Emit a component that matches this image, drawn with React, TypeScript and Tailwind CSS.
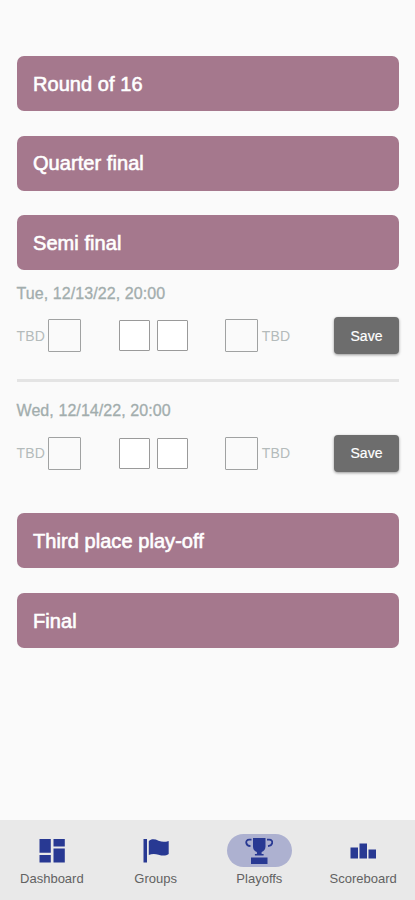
import type { ReactNode } from 'react'

function StageBar({ title }: { title: string }) {
  return (
    <h2 className="flex h-[55px] items-center rounded-[7px] bg-[#a5788d] px-[16.500px] text-[20px] font-normal tracking-[0.06px] text-white [-webkit-text-stroke:0.6px_white]">
      {title}
    </h2>
  )
}

function TeamFlag() {
  return <span className="size-[33px] shrink-0 rounded-[1px] border border-[#a0a2a2] bg-[#fafafa]" />
}

function ScoreInput({ label }: { label: string }) {
  return (
    <input
      aria-label={label}
      className="h-[31px] w-[31px] shrink-0 rounded-[1px] border border-[#9a9a9a] bg-white text-center text-sm outline-none"
    />
  )
}

function Match({ date }: { date: string }) {
  return (
    <article>
      <p className="text-[16px] leading-[20px] tracking-[0.08px] text-[#a2adad] [-webkit-text-stroke:0.3px_#a2adad]">
        {date}
      </p>
      <div className="mt-[13.500px] flex h-[37px] items-center text-[14px] text-[#b4bbbb]">
        <span className="w-[31.700px] pt-[0.3px] tracking-[0.2px]">TBD</span>
        <TeamFlag />
        <div className="ml-[37.500px] mr-[37px] flex gap-[7px]">
          <ScoreInput label="Home score" />
          <ScoreInput label="Away score" />
        </div>
        <TeamFlag />
        <span className="ml-1 pt-[0.3px] tracking-[0.2px]">TBD</span>
        <button className="ml-auto h-[37px] w-[65px] rounded-[4px] bg-[#6d6d6d] pt-[0.3px] text-[14px] text-white shadow-[0_1px_3px_rgba(0,0,0,0.4)] [-webkit-text-stroke:0.2px_white]">
          Save
        </button>
      </div>
    </article>
  )
}

function DashboardIcon() {
  return (
    <svg width="26" height="26" viewBox="0 0 26 26" fill="currentColor">
      <path d="M.5 1h11.300v13.800H.5zM.5 17h11.300v7.500H.5zM14.500 1h11.300v7.500H14.500zM14.500 10.500h11.300v14H14.500z" />
    </svg>
  )
}

function FlagIcon() {
  return (
    <svg width="26" height="26" viewBox="0 0 26 26" fill="currentColor">
      <path d="M.5 1H4v23.500H.5zM5.800 3.200C8 .9 11.500.8 15.500 2.700c3.800 1.500 6.500 1.300 10.200.2v13c-3 2.200-6 2-10.200.8-3.800-1.200-6.800-1-9.700.3z" />
    </svg>
  )
}

function TrophyIcon() {
  return (
    <svg width="28" height="28" viewBox="0 0 28 28" fill="currentColor">
      <path d="M8 1h12.500v8.500c0 3.200-1.600 4.500-3.900 5.500v2h2v1.500H9.900V17h2v-2C9.600 14 8 12.700 8 9.500zM6 20.500h16.500V27H6z" />
      <path
        d="M6.500 2.700H4.300C1.800 2.700 1 4.400 1.300 6c.3 1.700 1.800 2.900 4.200 3.200M22 2.700h2.200c2.500 0 3.300 1.700 3 3.300-.3 1.700-1.800 2.900-4.200 3.200"
        fill="none"
        stroke="currentColor"
        strokeWidth="1.800"
      />
    </svg>
  )
}

function PodiumIcon() {
  return (
    <svg width="26" height="26" viewBox="0 0 26 26" fill="currentColor">
      <path d="M.5 9.500H8V20.500H.5zM9.500 5.500H17v15H9.500zM18.500 11.500H26v9h-7.500z" />
    </svg>
  )
}

function NavItem({ label, icon, active = false }: { label: string; icon: ReactNode; active?: boolean }) {
  return (
    <a href="#" aria-current={active ? 'page' : undefined} className="flex flex-1 flex-col items-center pt-[14px]">
      <span
        className={`flex h-[33px] w-[65px] items-center justify-center rounded-full text-[#283993] ${active ? 'bg-[#adb1d0]' : ''}`}
      >
        {icon}
      </span>
      <span className="mt-1 text-[13px] leading-[16px] text-[#626262]">{label}</span>
    </a>
  )
}

export default function App() {
  return (
    <div className="flex h-[900px] w-full flex-col bg-[#fafafa] font-['Liberation_Sans',Arial,sans-serif]">
      <main className="flex-1 pl-[16.500px] pr-4 pt-[56px]">
        <div className="flex flex-col gap-[24.700px]">
          <StageBar title="Round of 16" />
          <StageBar title="Quarter final" />
          <StageBar title="Semi final" />
        </div>

        <div className="mb-[41.700px] pt-[13.500px]">
          <Match date="Tue, 12/13/22, 20:00" />
          <hr className="mb-[19px] mt-[24.900px] h-[3px] border-0 bg-[#e4e4e4]" />
          <Match date="Wed, 12/14/22, 20:00" />
        </div>

        <div className="flex flex-col gap-[24.700px]">
          <StageBar title="Third place play-off" />
          <StageBar title="Final" />
        </div>
      </main>

      <nav className="flex h-20 bg-[#e9e9e9]">
        <NavItem label="Dashboard" icon={<DashboardIcon />} />
        <NavItem label="Groups" icon={<FlagIcon />} />
        <NavItem label="Playoffs" icon={<TrophyIcon />} active />
        <NavItem label="Scoreboard" icon={<PodiumIcon />} />
      </nav>
    </div>
  )
}
